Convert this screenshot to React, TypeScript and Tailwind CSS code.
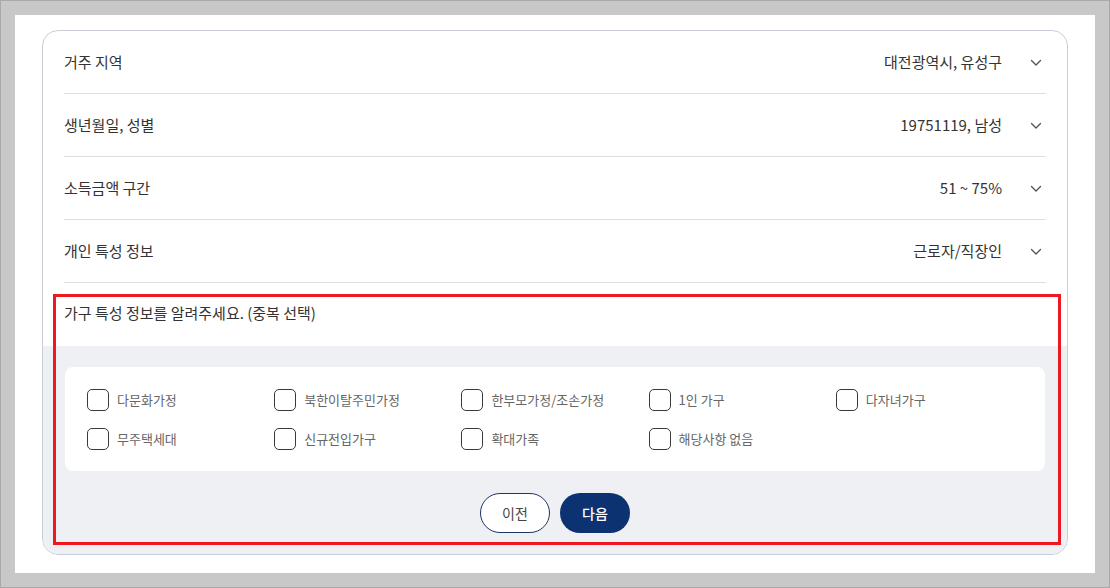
import React from "react";

const font = { fontFamily: '"Noto Sans CJK KR", "Noto Sans", sans-serif' };

function Chevron() {
  return (
    <svg width="12" height="8" viewBox="0 0 12 8" fill="none">
      <path d="M1.5 1.5 L6 6 L10.5 1.5" stroke="#555" strokeWidth="1.4" strokeLinecap="round" strokeLinejoin="round" />
    </svg>
  );
}

const rows = [
  ["거주 지역", "대전광역시, 유성구"],
  ["생년월일, 성별", "19751119, 남성"],
  ["소득금액 구간", "51 ~ 75%"],
  ["개인 특성 정보", "근로자/직장인"],
];

const options = [
  "다문화가정",
  "북한이탈주민가정",
  "한부모가정/조손가정",
  "1인 가구",
  "다자녀가구",
  "무주택세대",
  "신규전입가구",
  "확대가족",
  "해당사항 없음",
];

export default function App() {
  return (
    <div
      className="relative w-[1110px] h-[588px] bg-[#c8c8c8] border border-[#a9a9a9] p-[14px]"
      style={font}
    >
      <div className="w-full h-full bg-white px-[27px] pt-[15px]">
        <div className="w-[1026px] h-[525px] rounded-[16px] border border-[#c9ced6] overflow-hidden flex flex-col">
          <div className="px-[21px]">
            {rows.map(([label, value]) => (
              <div
                key={label}
                className="h-[63px] border-b border-[#dcdfe4] flex items-center justify-between text-[15px] text-[#333]"
              >
                <span>{label}</span>
                <div className="flex items-center">
                  <span>{value}</span>
                  <span className="w-[20px] ml-[24px] flex justify-center pt-[2px]">
                    <Chevron />
                  </span>
                </div>
              </div>
            ))}
            <div className="h-[63px] flex items-center text-[15px] text-[#333] pb-[2px]">
              가구 특성 정보를 알려주세요. (중복 선택)
            </div>
          </div>
          <div className="flex-1 bg-[#eef0f4] px-[22px] pt-[21px] flex flex-col items-center">
            <div className="w-full h-[104px] bg-white rounded-[8px] px-[22px] pt-[22px] grid grid-cols-5 gap-y-[17px] content-start">
              {options.map((o) => (
                <div key={o} className="flex items-center h-[22px]">
                  <span className="w-[22px] h-[22px] rounded-[5px] border-[1.5px] border-[#3a3a3a] bg-white shrink-0" />
                  <span className="ml-[8px] text-[13px] text-[#666]">{o}</span>
                </div>
              ))}
            </div>
            <div className="mt-[22px] flex gap-[10px]">
              <button className="w-[70px] h-[40px] rounded-full border border-[#1c3562] bg-white text-[14px] text-[#444]">
                이전
              </button>
              <button className="w-[70px] h-[40px] rounded-full bg-[#0c3272] text-[14px] text-white font-medium">
                다음
              </button>
            </div>
          </div>
        </div>
      </div>
      <div className="absolute left-[52px] top-[293px] w-[1008px] h-[251px] border-[3px] border-[#ee1722] pointer-events-none" />
    </div>
  );
}
